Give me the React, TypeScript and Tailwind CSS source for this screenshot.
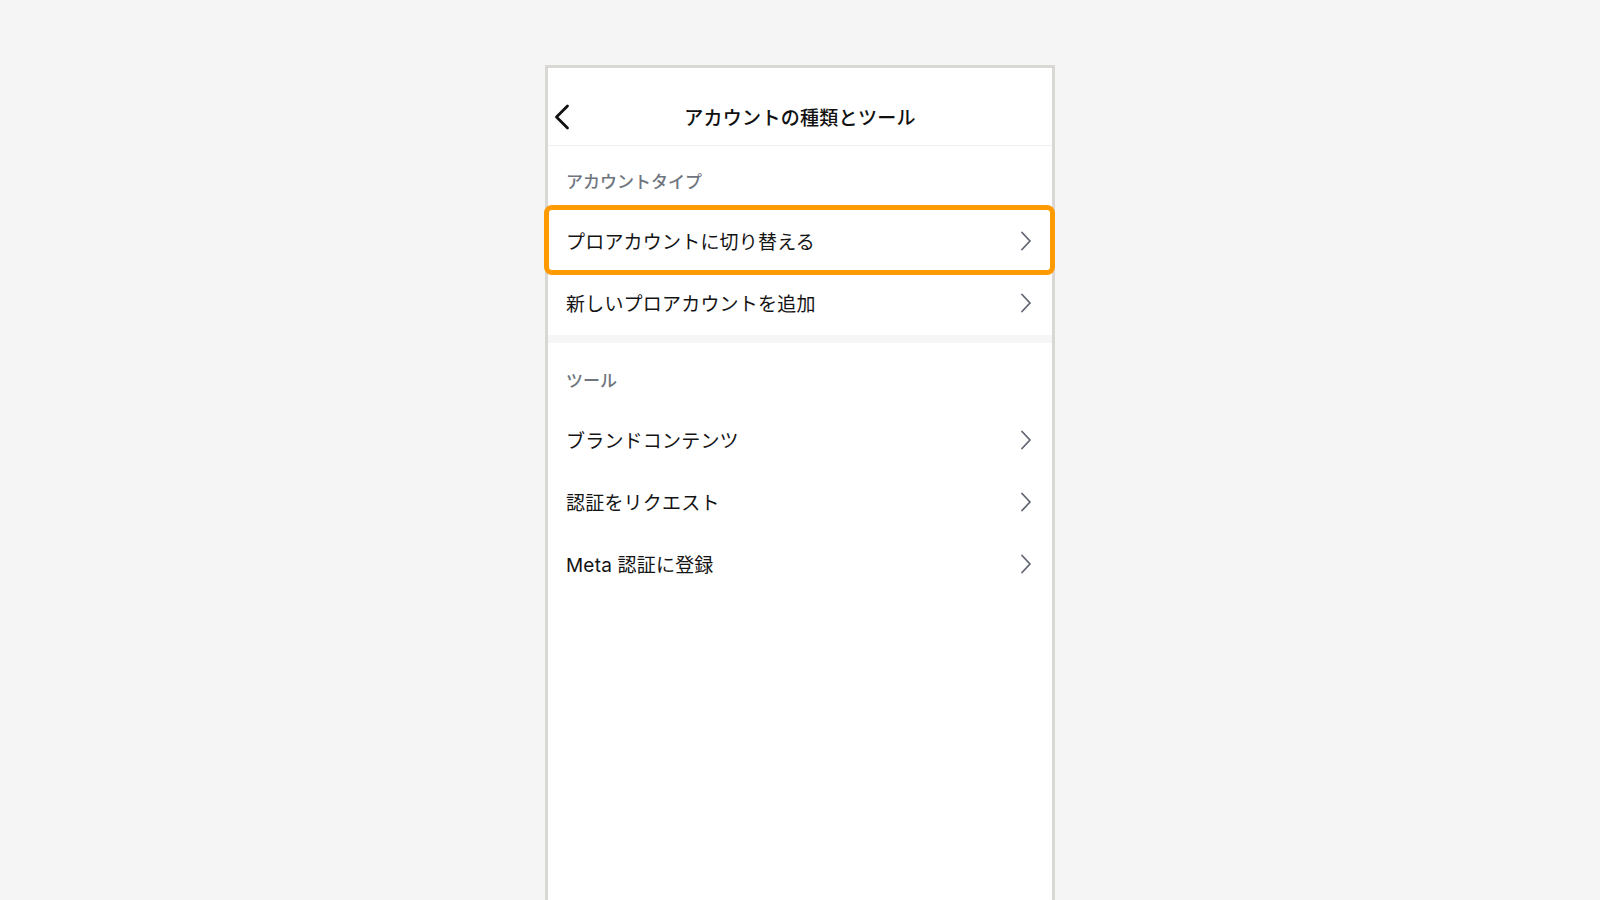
import React from 'react';

const FONT = "font-['Inter','Noto_Sans_CJK_JP',sans-serif]";

const ChevronRight: React.FC = () => (
  <svg width="12" height="20" viewBox="0 0 12 20" fill="none" className="shrink-0">
    <path d="M2 1.5 L10 10 L2 18.5" stroke="#5f6670" strokeWidth="1.8" strokeLinecap="round" strokeLinejoin="round" />
  </svg>
);

const BackChevron: React.FC = () => (
  <svg width="16" height="26" viewBox="0 0 16 26" fill="none">
    <path d="M13.5 2 L2.5 13 L13.5 24" stroke="#111" strokeWidth="2.8" strokeLinecap="round" strokeLinejoin="round" />
  </svg>
);

interface RowProps {
  label: string;
  highlighted?: boolean;
}

const Row: React.FC<RowProps> = ({ label, highlighted }) => (
  <div className="relative flex items-center justify-between h-[62px] pl-[18px] pr-[20px]">
    <span className="mt-[4px] text-[19px] text-[#141414] tracking-[0.2px]">{label}</span>
    <ChevronRight />
    {highlighted && (
      <span className="absolute -top-[5px] -bottom-[3px] -left-[4px] -right-[3px] border-[5px] border-[#ff9a00] rounded-[8px] pointer-events-none"></span>
    )}
  </div>
);

const SectionLabel: React.FC<{ children: React.ReactNode; top: string }> = ({ children, top }) => (
  <div className={`${top} pb-[18px] pl-[18px]`}>
    <p className="text-[17px] leading-[20px] font-medium text-[#6f757e]">{children}</p>
  </div>
);

export default function App() {
  return (
    <div className={`h-screen w-full overflow-hidden bg-[#f5f5f5] flex justify-center pt-[65px] ${FONT}`}>
      <div className="w-[510px] h-[900px] border-[3px] border-b-0 border-[#dad8d5] bg-white flex flex-col">
        {/* Header */}
        <div className="relative flex items-center justify-center h-[42px] mt-[30px] mb-[5px]">
          <button className="absolute left-[6px] top-[19px] -translate-y-1/2">
            <BackChevron />
          </button>
          <h1 className="text-[19px] font-medium text-[#111] tracking-[0.3px]">アカウントの種類とツール</h1>
        </div>
        <div className="h-px bg-[#f0f0f0]"></div>

        <SectionLabel top="pt-[26px]">アカウントタイプ</SectionLabel>
        <Row label="プロアカウントに切り替える" highlighted />
        <Row label="新しいプロアカウントを追加" />

        <div className="h-[8px] bg-[#f6f6f6] mt-[1px]"></div>

        <SectionLabel top="pt-[28px]">ツール</SectionLabel>
        <Row label="ブランドコンテンツ" />
        <Row label="認証をリクエスト" />
        <Row label="Meta 認証に登録" />
      </div>
    </div>
  );
}
